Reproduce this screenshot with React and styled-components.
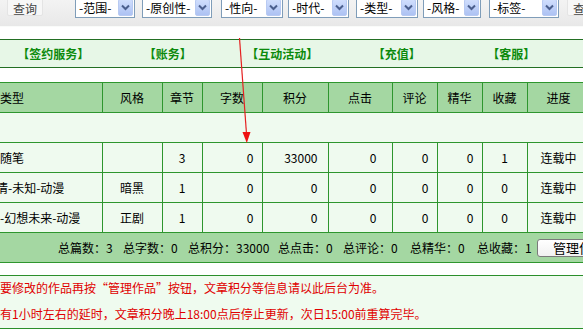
import React from 'react';
import styled, { createGlobalStyle } from 'styled-components';

const GlobalStyle = createGlobalStyle`
  html,
  body {
    margin: 0;
    padding: 0;
    background: #fff;
    overflow: hidden;
  }

  body {
    font-family: "Noto Sans CJK SC", "Liberation Sans", sans-serif;
    font-size: 12px;
    color: #000;
  }
`;

const Page = styled.div`
  position: relative;
  width: 583px;
  height: 329px;
  overflow: hidden;
`;

const TopBar = styled.div`
  display: flex;
  align-items: flex-start;
  height: 26px;
  background: linear-gradient(#f3f3f3, #e8e8e8);
  border-bottom: 1px solid #f9fbf9;
`;

const QueryButton = styled.div`
  flex: none;
  box-sizing: border-box;
  margin: -4px 0 0 ${({ ml }) => ml}px;
  width: ${({ w }) => w}px;
  height: 20px;
  padding-top: 3px;
  background: #f7f7f7;
  border: 1px solid #e4e4e4;
  border-radius: 2px;
  color: #444;
  font-size: 12px;
  text-align: center;
`;

const SelectBox = styled.div`
  flex: none;
  display: flex;
  align-items: center;
  justify-content: space-between;
  box-sizing: border-box;
  margin: -3px 0 0 ${({ ml }) => ml}px;
  width: ${({ w }) => w}px;
  height: 21px;
  padding: 0 1px 0 3px;
  background: #fff;
  border: 1px solid #7f9db9;
`;

const SelectLabel = styled.span`
  white-space: nowrap;
  line-height: 18px;
`;

const ArrowBox = styled.span`
  display: flex;
  align-items: center;
  justify-content: center;
  box-sizing: border-box;
  width: 15px;
  height: 17px;
  background: linear-gradient(#d0defd, #adc2f3);
  border: 1px solid #b8caf2;
  border-radius: 2px;
`;

const NavBar = styled.div`
  display: grid;
  grid-template-columns: repeat(5, 114.5px);
  margin: 12px 0 0 -4px;
  height: 27px;
  background: #e7f7e7;
  border-top: 1px solid #236f23;
  border-bottom: 1px solid #236f23;
`;

const NavItem = styled.div`
  text-align: center;
  line-height: 27px;
  color: #0c8a0c;
  font-weight: bold;
  white-space: nowrap;
`;

const Table = styled.table`
  margin-top: 14px;
  width: 590px;
  table-layout: fixed;
  border-collapse: collapse;
`;

const HeadRow = styled.tr`
  background: #a4d7a2;
`;

const BodyRow = styled.tr`
  background: #effaef;
`;

const Th = styled.th`
  height: 29px;
  padding: 0;
  font-weight: normal;
  text-align: ${({ align }) => align || 'center'};
  border: 1px solid #2e962e;
  border-left: ${({ first }) => (first ? 'none' : '1px solid #2e962e')};
  white-space: nowrap;
  overflow: hidden;
`;

const Td = styled.td`
  height: 29px;
  padding: 0 ${({ pr }) => pr || 0}px 0 0;
  text-align: ${({ align }) => align || 'center'};
  border: 1px solid #2e962e;
  border-left: ${({ first }) => (first ? 'none' : '1px solid #2e962e')};
  text-indent: ${({ indent }) => indent || 0}px;
  white-space: nowrap;
  overflow: hidden;
`;

const BlankCell = styled.td`
  height: 29px;
  padding: 0;
  border-top: 1px solid #2e962e;
  border-bottom: 1px solid #2e962e;
`;

const FootCell = styled.td`
  height: 29px;
  padding: 0;
  background: #a4d7a2;
  border-top: 1px solid #2e962e;
  border-bottom: 1px solid #2e962e;
`;

const Totals = styled.div`
  display: grid;
  grid-template-columns: 65px 65px 90px 65px 67px 67px 60px 80px;
  align-items: center;
  padding-left: 58px;
  white-space: nowrap;
`;

const ManageButton = styled.div`
  box-sizing: border-box;
  width: 80px;
  height: 18px;
  padding-left: 15px;
  line-height: 16px;
  background: linear-gradient(#ffffff, #f1f1f1);
  border: 1px solid #7a7a7a;
  border-radius: 3px;
  font-size: 13px;
`;

const Notes = styled.div`
  margin-top: 12px;
  background: #effbef;
  border-top: 1px solid #2b8f2b;
  border-bottom: 1px solid #2b8f2b;
`;

const NoteLine = styled.div`
  height: 26px;
  line-height: 24px;
  color: #e00000;
  white-space: nowrap;
`;

const Overlay = styled.svg`
  position: absolute;
  left: 0;
  top: 0;
  pointer-events: none;
`;

const selects = [
  { label: '-范围-', w: 60, ml: 32 },
  { label: '-原创性-', w: 70, ml: 7 },
  { label: '-性向-', w: 62, ml: 9 },
  { label: '-时代-', w: 61, ml: 5 },
  { label: '-类型-', w: 62, ml: 7 },
  { label: '-风格-', w: 58, ml: 5 },
  { label: '-标签-', w: 70, ml: 8 },
];

const navItems = ['【签约服务】', '【账务】', '【互动活动】', '【充值】', '【客服】'];

const colWidths = [102, 60, 40, 60, 66, 64, 45, 45, 45, 63];

const headers = ['风格', '章节', '字数', '积分', '点击', '评论', '精华', '收藏', '进度'];

const rows = [
  { type: '随笔', style: '', ch: 3, words: 0, score: 33000, click: 0, comment: 0, best: 0, fav: 1 },
  { type: '情-未知-动漫', indent: -4, style: '暗黑', ch: 1, words: 0, score: 0, click: 0, comment: 0, best: 0, fav: 0 },
  { type: '-幻想未来-动漫', style: '正剧', ch: 1, words: 0, score: 0, click: 0, comment: 0, best: 0, fav: 0 },
];

const totals = ['总篇数：3', '总字数：0', '总积分：33000', '总点击：0', '总评论：0', '总精华：0', '总收藏：1'];

const Chevron = () => (
  <svg width="9" height="7" viewBox="0 0 9 7">
    <polyline points="1,1.5 4.5,5 8,1.5" fill="none" stroke="#4b5f8e" strokeWidth="2" />
  </svg>
);

const App = () => {
  return (
    <Page>
      <GlobalStyle />
      <TopBar>
        <QueryButton ml={7} w={36}>查询</QueryButton>
        {selects.map((s) => (
          <SelectBox key={s.label} w={s.w} ml={s.ml}>
            <SelectLabel>{s.label}</SelectLabel>
            <ArrowBox>
              <Chevron />
            </ArrowBox>
          </SelectBox>
        ))}
        <QueryButton ml={8} w={36}>查询</QueryButton>
      </TopBar>

      <NavBar>
        {navItems.map((n) => (
          <NavItem key={n}>{n}</NavItem>
        ))}
      </NavBar>

      <Table>
        <colgroup>
          {colWidths.map((w, i) => (
            <col key={i} style={{ width: w }} />
          ))}
        </colgroup>
        <thead>
          <HeadRow>
            <Th first align="left">类型</Th>
            {headers.map((h) => (
              <Th key={h}>{h}</Th>
            ))}
          </HeadRow>
        </thead>
        <tbody>
          <BodyRow>
            <BlankCell colSpan={10} />
          </BodyRow>
          {rows.map((r) => (
            <BodyRow key={r.type}>
              <Td first align="left" indent={r.indent}>{r.type}</Td>
              <Td>{r.style}</Td>
              <Td>{r.ch}</Td>
              <Td align="right" pr={8}>{r.words}</Td>
              <Td align="right" pr={10}>{r.score}</Td>
              <Td align="right" pr={15}>{r.click}</Td>
              <Td align="right" pr={8}>{r.comment}</Td>
              <Td align="right" pr={8}>{r.best}</Td>
              <Td>{r.fav}</Td>
              <Td>连载中</Td>
            </BodyRow>
          ))}
          <tr>
            <FootCell colSpan={10}>
              <Totals>
                {totals.map((t) => (
                  <span key={t}>{t}</span>
                ))}
                <ManageButton>管理作品</ManageButton>
              </Totals>
            </FootCell>
          </tr>
        </tbody>
      </Table>

      <Notes>
        <NoteLine>要修改的作品再按“管理作品”按钮，文章积分等信息请以此后台为准。</NoteLine>
        <NoteLine>有1小时左右的延时，文章积分晚上18:00点后停止更新，次日15:00前重算完毕。</NoteLine>
      </Notes>

      <Overlay width="583" height="329" viewBox="0 0 583 329">
        <line x1="239.5" y1="38" x2="246.5" y2="134" stroke="#e52020" strokeWidth="1.2" />
        <polygon points="242.5,132 250.5,132 246.8,143" fill="#ee1111" />
      </Overlay>
    </Page>
  );
};

export default App;
